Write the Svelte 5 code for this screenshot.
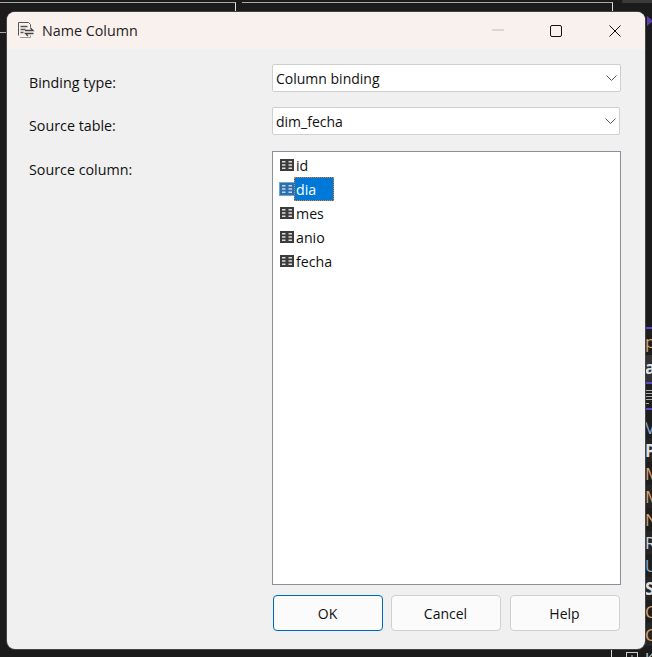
<script>
  const columns = ["id", "dia", "mes", "anio", "fecha"];
  const selected = "dia";
  const sideRows = [
    { text: "V", cls: "blue" },
    { text: "P", cls: "bold" },
    { text: "M", cls: "orange" },
    { text: "M", cls: "orange" },
    { text: "N", cls: "orange" },
    { text: "R", cls: "white" },
    { text: "U", cls: "blue" },
    { text: "S", cls: "bold" },
    { text: "C", cls: "orange" },
    { text: "C", cls: "orange" },
  ];
</script>

<main class="desktop">
  <div class="back-tabs">
    <div class="tab tab-a"></div>
    <div class="tab tab-b"></div>
  </div>
  <div class="corner-box"></div>
  <svg class="corner-mark" width="6" height="10" viewBox="0 0 6 10"><path d="M0 0l6 5-6 5z" fill="#5a3fb0" /></svg>

  <div class="side">
    <div class="side-head orange">pp</div>
    <div class="side-head lit bold">a</div>
    <div class="side-head tools">
      <svg width="7" height="16" viewBox="0 0 7 16"><path d="M0 1.5h7M0 4.5h7M0 7.5h7M0 10.5h7M0 14.5h4" stroke="#aaa" /></svg>
    </div>
    {#each sideRows as row}
      <div class="side-row {row.cls}">{row.text}</div>
    {/each}
  </div>

  <div class="bottom-strip">
    <div class="expander">
      <svg width="12" height="12" viewBox="0 0 12 12" fill="none"><rect x="0.5" y="0.5" width="11" height="11" stroke="#ccc" /><path d="M3 6h6M6 3v6" stroke="#ccc" /></svg>
    </div>
    <span class="white">K</span>
  </div>

  <div class="dialog">
    <header class="titlebar">
      <svg class="app-icon" width="18" height="18" viewBox="0 0 18 18" fill="none">
        <path d="M1.5 13.5V0.5h10l2 2v3" stroke="#555" />
        <path d="M3.5 4.5h7M3.5 7.5h5M3.5 10.5h3" stroke="#555" stroke-width="1.4" />
        <path d="M3 15.5h10.5v-2" stroke="#999" />
        <path d="M8 8.5h8l-2.5-2.5M16.5 11.5h-8l2.5 2.5" stroke="#444" stroke-width="1.3" />
      </svg>
      <span class="title">Name Column</span>
      <div class="win-buttons">
        <svg class="min" width="12" height="12" viewBox="0 0 12 12"><path d="M0 5h12" stroke="#bdbdbd" /></svg>
        <svg class="max" width="12" height="12" viewBox="0 0 12 12" fill="none"><rect x="0.5" y="0.5" width="11" height="11" rx="1.5" stroke="#111" /></svg>
        <svg width="12" height="12" viewBox="0 0 12 12"><path d="M0.5 0.5l11 11M11.5 0.5l-11 11" stroke="#111" /></svg>
      </div>
    </header>

    <div class="body">
      <div class="labels">
        <div class="label">Binding type:</div>
        <div class="label">Source table:</div>
        <div class="label">Source column:</div>
      </div>

      <div class="fields">
        <div class="select first">
          <span>Column binding</span>
          <svg width="11" height="6" viewBox="0 0 11 6" fill="none"><path d="M0.5 0.5l5 5 5-5" stroke="#555" /></svg>
        </div>
        <div class="select second">
          <span>dim_fecha</span>
          <svg width="11" height="6" viewBox="0 0 11 6" fill="none"><path d="M0.5 0.5l5 5 5-5" stroke="#555" /></svg>
        </div>

        <div class="tree">
          {#each columns as col}
            <div class="tree-row">
              <svg class="col-icon" class:sel-icon={col === selected} width="14" height="12" viewBox="0 0 14 12">
                <rect width="14" height="12" fill={col === selected ? "#2f6ea8" : "#3c3c3c"} />
                <path d="M2 2h3.5v1.5H2zM8.5 2H12v1.5H8.5zM2 5.25h3.5v1.5H2zM8.5 5.25H12v1.5H8.5zM2 8.5h3.5V10H2zM8.5 8.5H12V10H8.5z" fill={col === selected ? "#bcd9f2" : "#ddd"} />
              </svg>
              <span class="col-name" class:selected={col === selected}>{col}</span>
            </div>
          {/each}
        </div>

        <div class="buttons">
          <button class="default">OK</button>
          <button>Cancel</button>
          <button class="help">Help</button>
        </div>
      </div>
    </div>
  </div>
</main>

<style>
  :global(body) {
    margin: 0;
    background: #1b1b1b;
  }

  .desktop {
    position: relative;
    width: 652px;
    height: 657px;
    overflow: hidden;
    background: #1b1b1b;
    font-family: "Open Sans", "Noto Sans", sans-serif;
  }

  .back-tabs {
    display: flex;
    gap: 6px;
    padding-top: 2px;
  }

  .tab {
    border-top: 1px solid #aaa;
    border-right: 1px solid #ddd;
  }

  .tab-a {
    width: 235px;
    height: 29px;
    border-bottom: 1px solid #aaa;
  }

  .tab-b {
    width: 370px;
    height: 40px;
  }

  .corner-box {
    position: absolute;
    left: 622px;
    top: 0;
    width: 30px;
    height: 3px;
    border-left: 1px solid #333;
    background: #3a3a3a;
  }

  .corner-mark {
    position: absolute;
    left: 647px;
    top: 16px;
  }

  .side {
    position: absolute;
    left: 645px;
    top: 327px;
    width: 7px;
    overflow: hidden;
    font-size: 17px;
    border-top: 2px solid #5b48c8;
    background: #1e1e1e;
  }

  .side-head {
    height: 26px;
    line-height: 26px;
    white-space: nowrap;
  }

  .lit {
    height: 27px;
    background: #333;
    border-bottom: 2px solid #5b48c8;
  }

  .tools {
    height: 26px;
    box-sizing: border-box;
    padding-top: 5px;
    margin-bottom: 6px;
    border-bottom: 2px solid #5b48c8;
  }

  .tools svg {
    display: block;
  }

  .side-row {
    height: 23px;
    line-height: 23px;
  }

  .side-row:nth-child(odd) {
    background: #252525;
  }

  .orange {
    color: #d8a26e;
  }

  .blue {
    color: #7fa8d0;
  }

  .white {
    color: #d0d0d0;
  }

  .bold {
    color: #e0e0e0;
    font-weight: 700;
  }

  .bottom-strip {
    position: absolute;
    left: 611px;
    top: 649px;
    display: flex;
    height: 8px;
    border-left: 1px solid #ddd;
    font-size: 15px;
    line-height: 16px;
  }

  .expander {
    margin: 1px 7px 0 14px;
  }

  .dialog {
    position: absolute;
    left: 7px;
    top: 12px;
    width: 638px;
    height: 637px;
    border-radius: 8px;
    overflow: hidden;
    background: #f0f0f0;
    color: #111;
    box-shadow: 0 0 0 1px #444;
  }

  .titlebar {
    display: flex;
    align-items: center;
    height: 37px;
    padding-left: 10px;
    background: #f9f1ee;
  }

  .title {
    margin-left: 7px;
    font-size: 14.3px;
    color: #222;
  }

  .win-buttons {
    display: flex;
    align-items: center;
    margin-left: auto;
    margin-right: 24px;
  }

  .min {
    margin-right: 46px;
  }

  .max {
    margin-right: 47px;
  }

  .body {
    display: flex;
    padding: 15px 24px 0 22px;
  }

  .labels {
    width: 243px;
    font-size: 14.3px;
  }

  .label {
    height: 43px;
    padding-top: 9px;
    box-sizing: border-box;
  }

  .label:nth-child(2) {
    height: 44px;
  }

  .fields {
    flex: 1;
    min-width: 0;
  }

  .select {
    display: flex;
    align-items: center;
    justify-content: space-between;
    box-sizing: border-box;
    height: 28px;
    padding: 0 3px 0 3px;
    margin-bottom: 15px;
    background: #fff;
    border: 1px solid #cfcfcf;
    border-radius: 2px;
    font-size: 14px;
  }

  .select.second {
    width: 348px;
    margin-bottom: 16px;
  }

  .tree {
    box-sizing: border-box;
    width: 349px;
    height: 434px;
    padding: 1px 7px;
    background: #fff;
    border: 1px solid #8b8f98;
    font-size: 14.2px;
  }

  .tree-row {
    display: flex;
    align-items: center;
    height: 24px;
  }

  .sel-icon {
    outline: 1px solid #6aa5dc;
  }

  .col-name {
    padding: 1px 2px 0;
    line-height: 23px;
  }

  .col-name.selected {
    width: 40px;
    box-sizing: border-box;
    background: #0078d7;
    color: #fff;
    outline: 1px dotted #f08020;
    outline-offset: -1px;
  }

  .buttons {
    display: flex;
    gap: 8px;
    margin-top: 10px;
    padding-left: 1px;
  }

  button {
    width: 110px;
    height: 36px;
    padding: 0 1px 0 0;
    background: #fbfbfb;
    border: 1px solid #d0d0d0;
    border-radius: 4px;
    font: inherit;
    font-size: 14px;
    color: #111;
  }

  button.default {
    border-color: #0067c0;
  }

  button.help {
    margin-left: 1px;
  }
</style>
